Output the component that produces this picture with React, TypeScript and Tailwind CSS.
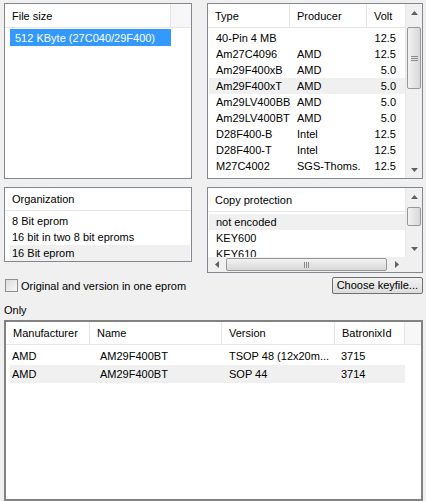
import React from 'react';

const font = { fontFamily: '"Liberation Sans", Arial, sans-serif' };

function ArrowUp() {
  return (
    <svg width="7" height="4" viewBox="0 0 7 4">
      <path d="M0 4 L3.5 0 L7 4 Z" fill="#606060" />
    </svg>
  );
}

function ArrowDown() {
  return (
    <svg width="7" height="4" viewBox="0 0 7 4">
      <path d="M0 0 L3.5 4 L7 0 Z" fill="#606060" />
    </svg>
  );
}

function ArrowLeft() {
  return (
    <svg width="4" height="7" viewBox="0 0 4 7">
      <path d="M4 0 L0 3.5 L4 7 Z" fill="#606060" />
    </svg>
  );
}

function ArrowRight() {
  return (
    <svg width="4" height="7" viewBox="0 0 4 7">
      <path d="M0 0 L4 3.5 L0 7 Z" fill="#606060" />
    </svg>
  );
}

function VScroll({ thumbTop, thumbHeight, grip }: { thumbTop: number; thumbHeight: number; grip?: boolean }) {
  return (
    <div className="relative flex w-[17px] flex-col bg-[#f0f0f0] border-l border-[#e8e8e8]">
      <div className="flex h-[17px] items-center justify-center">
        <ArrowUp />
      </div>
      <div className="relative flex-1">
        <div
          className="absolute left-[1px] right-[1px] flex items-center justify-center rounded-[2px] border border-[#979797] bg-gradient-to-r from-[#f2f2f2] to-[#d8d8d8]"
          style={{ top: thumbTop, height: thumbHeight }}
        >
          {grip && (
            <div className="flex flex-col gap-[1px]">
              <div className="h-px w-[7px] bg-[#8a8a8a]" />
              <div className="h-px w-[7px] bg-[#8a8a8a]" />
              <div className="h-px w-[7px] bg-[#8a8a8a]" />
            </div>
          )}
        </div>
      </div>
      <div className="flex h-[17px] items-center justify-center">
        <ArrowDown />
      </div>
    </div>
  );
}

function HeaderCell({ label, width, last }: { label: string; width?: number; last?: boolean }) {
  return (
    <div
      className={`flex h-full items-center px-[7px] pt-px ${last ? 'flex-1' : 'border-r border-[#e5e5e5]'}`}
      style={width ? { width } : undefined}
    >
      {label}
    </div>
  );
}

const chips = [
  ['40-Pin 4 MB', '', '12.5'],
  ['Am27C4096', 'AMD', '12.5'],
  ['Am29F400xB', 'AMD', '5.0'],
  ['Am29F400xT', 'AMD', '5.0'],
  ['Am29LV400BB', 'AMD', '5.0'],
  ['Am29LV400BT', 'AMD', '5.0'],
  ['D28F400-B', 'Intel', '12.5'],
  ['D28F400-T', 'Intel', '12.5'],
  ['M27C4002', 'SGS-Thoms.', '12.5'],
];

const organizations = ['8 Bit eprom', '16 bit in two 8 bit eproms', '16 Bit eprom'];

const protections = ['not encoded', 'KEY600', 'KEY610'];

const devices = [
  ['AMD', 'AM29F400BT', 'TSOP 48 (12x20m...', '3715'],
  ['AMD', 'AM29F400BT', 'SOP 44', '3714'],
];

export default function App() {
  return (
    <div className="h-[501px] w-[426px] overflow-hidden bg-[#f0f0f0] pl-[4px] pr-[3px] pt-[3px] text-[11px] text-black" style={font}>
      {/* Obere Reihe */}
      <div className="flex gap-[15px]">
        <div className="flex h-[176px] w-[188px] flex-col border border-[#828790] bg-white">
          <div className="flex h-[24px] border-b border-[#e5e5e5]">
            <HeaderCell label="File size" width={166} />
            <div className="flex-1 bg-[#f7f7f7]" />
          </div>
          <div className="pl-[5px] pt-[1px]">
            <div className="flex h-[17px] w-[161px] items-center bg-[#3399ff] pl-[5px] pt-px text-white">
              512 KByte (27C040/29F400)
            </div>
          </div>
        </div>

        <div className="flex h-[176px] flex-1 border border-[#828790] bg-white">
          <div className="flex flex-1 flex-col">
            <div className="flex h-[24px] border-b border-[#e5e5e5]">
              <HeaderCell label="Type" width={82} />
              <HeaderCell label="Producer" width={77} />
              <HeaderCell label="Volt" last />
            </div>
            <div className="pl-[1px] pt-[2px]">
              {chips.map((c, i) => (
                <div key={i} className={`flex h-[16px] items-center ${i === 3 ? 'bg-[#f0f0f0]' : ''}`}>
                  <div className="w-[81px] pl-[7px] whitespace-nowrap">{c[0]}</div>
                  <div className="w-[77px] pl-[7px] whitespace-nowrap">{c[1]}</div>
                  <div className="flex-1 pr-[9px] text-right">{c[2]}</div>
                </div>
              ))}
            </div>
          </div>
          <VScroll thumbTop={6} thumbHeight={62} grip />
        </div>
      </div>

      {/* Mittlere Reihe */}
      <div className="mt-[8px] flex gap-[15px]">
        <div className="w-[188px]">
          <div className="flex h-[75px] flex-col border border-[#828790] bg-white">
            <div className="flex h-[24px] border-b border-[#e5e5e5]">
              <HeaderCell label="Organization" last />
            </div>
            <div className="pl-[5px] pr-[1px] pt-[2px]">
              {organizations.map((o, i) => (
                <div key={i} className={`flex h-[16px] items-center pl-[2px] pt-px ${i === 2 ? 'bg-[#f0f0f0]' : ''}`}>
                  {o}
                </div>
              ))}
            </div>
          </div>
          <label className="mt-[15px] flex items-center gap-[3px] whitespace-nowrap">
            <span className="ml-px h-[13px] w-[13px] border border-[#8e8f8f] bg-gradient-to-br from-[#dcdcdc] to-[#f8f8f8]" />
            <span className="pt-px">Original and version in one eprom</span>
          </label>
        </div>

        <div className="flex flex-1 flex-col items-end">
          <div className="flex h-[86px] w-full flex-col border border-[#828790] bg-white">
            <div className="flex min-h-0 flex-1">
              <div className="flex flex-1 flex-col overflow-hidden">
                <div className="flex h-[24px] shrink-0 border-b border-[#e5e5e5]">
                  <HeaderCell label="Copy protection" last />
                </div>
                <div className="pl-[1px] pt-[2px]">
                  {protections.map((p, i) => (
                    <div key={i} className={`flex h-[16px] shrink-0 items-center pl-[7px] pt-px ${i === 0 ? 'bg-[#f0f0f0]' : ''}`}>
                      {p}
                    </div>
                  ))}
                </div>
              </div>
              <VScroll thumbTop={2} thumbHeight={19} />
            </div>
            <div className="flex h-[15px] shrink-0 bg-[#f0f0f0]">
              <div className="flex w-[17px] items-center justify-center">
                <ArrowLeft />
              </div>
              <div className="relative flex-1">
                <div className="absolute bottom-[1px] left-[1px] right-[1px] top-[1px] flex items-center justify-center rounded-[2px] border border-[#979797] bg-gradient-to-b from-[#f2f2f2] to-[#d8d8d8]">
                  <div className="flex gap-[1px]">
                    <div className="h-[6px] w-px bg-[#8a8a8a]" />
                    <div className="h-[6px] w-px bg-[#8a8a8a]" />
                    <div className="h-[6px] w-px bg-[#8a8a8a]" />
                  </div>
                </div>
              </div>
              <div className="flex w-[17px] items-center justify-center">
                <ArrowRight />
              </div>
              <div className="w-[17px] bg-[#f0f0f0]" />
            </div>
          </div>
          <button className="mt-[4px] flex h-[17px] items-center rounded-[2px] border border-[#707070] bg-gradient-to-b from-[#f2f2f2] to-[#dddddd] px-[4px] leading-none">
            Choose keyfile...
          </button>
        </div>
      </div>

      {/* Untere Liste */}
      <div className="mt-[7px] leading-[16px]">Only</div>
      <div className="mt-[2px] flex h-[181px] flex-col border-2 border-[#828282] bg-white">
        <div className="flex h-[23px] border-b border-[#e5e5e5]">
          <HeaderCell label="Manufacturer" width={84} />
          <HeaderCell label="Name" width={132} />
          <HeaderCell label="Version" width={113} />
          <HeaderCell label="BatronixId" width={70} />
          <div className="flex-1 bg-[#f7f7f7]" />
        </div>
        <div className="pl-[4px] pt-[2px]">
          {devices.map((d, i) => (
            <div key={i} className={`flex h-[18px] w-[395px] items-center pt-px ${i === 1 ? 'bg-[#f0f0f0]' : ''}`}>
              <div className="w-[80px] pl-[2px]">{d[0]}</div>
              <div className="w-[139px] pl-[10px] whitespace-nowrap">{d[1]}</div>
              <div className="w-[112px] whitespace-nowrap">{d[2]}</div>
              <div className="flex-1">{d[3]}</div>
            </div>
          ))}
        </div>
      </div>
    </div>
  );
}
